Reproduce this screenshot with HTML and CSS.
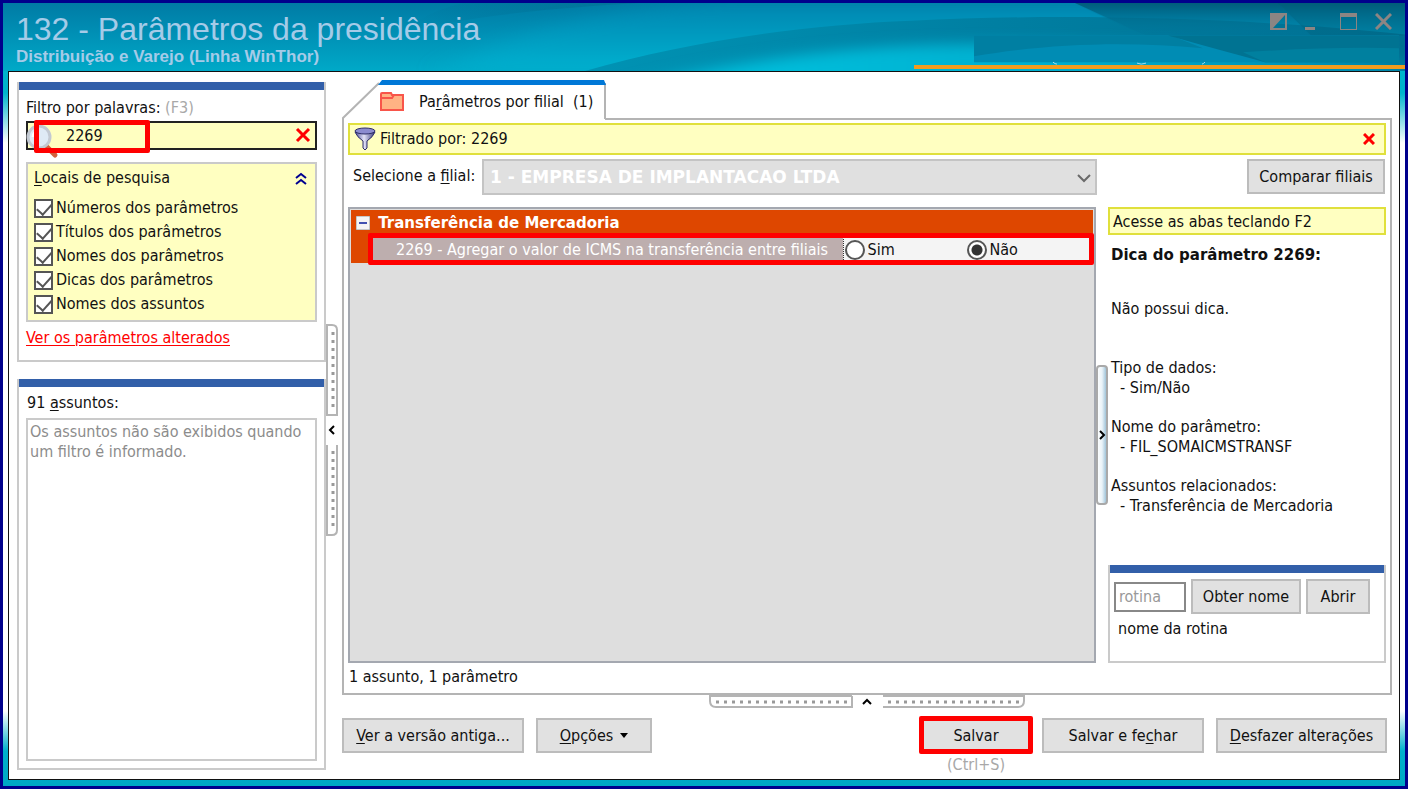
FILE: index.html
```html
<!DOCTYPE html>
<html lang="pt-BR">
<head>
    <meta charset="UTF-8">
    <meta name="viewport" content="width=device-width, initial-scale=1.0">
    <title>132 - Parâmetros da presidência</title>
    <link rel="stylesheet" href="styles.css">
</head>
<body>
    <div class="window">
        <header class="titlebar">
            <svg class="titlebar-art" viewBox="0 0 1402 69" preserveAspectRatio="none" aria-hidden="true">
                <defs>
                    <linearGradient id="sky" x1="0" y1="0" x2="0" y2="1">
                        <stop offset="0" stop-color="#007ba5"/>
                        <stop offset="1" stop-color="#00a9c8"/>
                    </linearGradient>
                    <linearGradient id="mid" x1="0" y1="0" x2="0" y2="1">
                        <stop offset="0" stop-color="#008db8"/>
                        <stop offset="1" stop-color="#00b8d6"/>
                    </linearGradient>
                    <linearGradient id="low" x1="0" y1="0" x2="1" y2="0">
                        <stop offset="0" stop-color="#0093b4"/>
                        <stop offset="0.5" stop-color="#007fa2"/>
                        <stop offset="1" stop-color="#007092"/>
                    </linearGradient>
                    <linearGradient id="glow" x1="0" y1="0" x2="1" y2="0">
                        <stop offset="0" stop-color="#00c4e0"/>
                        <stop offset="0.5" stop-color="#00b0d0"/>
                        <stop offset="1" stop-color="#008aae"/>
                    </linearGradient>
                    <linearGradient id="shade" x1="0" y1="0" x2="1" y2="0">
                        <stop offset="0" stop-color="#006c90" stop-opacity="0"/>
                        <stop offset="1" stop-color="#006c90"/>
                    </linearGradient>
                    <linearGradient id="corner" x1="0" y1="0" x2="0" y2="1">
                        <stop offset="0" stop-color="#00526f"/>
                        <stop offset="1" stop-color="#007c9e" stop-opacity="0"/>
                    </linearGradient>
                    <filter id="soft" x="-10%" y="-50%" width="120%" height="200%">
                        <feGaussianBlur stdDeviation="20 7"/>
                    </filter>
                    <clipPath id="lowClip">
                        <path d="M582 69C680 40 800 22 908 18C1060 10 1250 15 1402 32V69Z"/>
                    </clipPath>
                </defs>
                <rect width="1402" height="69" fill="url(#sky)"/>
                <path d="M400 30C460 14 550 5 637 0H460Q420 10 400 30Z" fill="url(#shade)" opacity="0.6"/>
                <path d="M450 69C480 40 560 10 700 0H1402V69Z" fill="url(#mid)" opacity="0.6" filter="url(#soft)"/>
                <path d="M582 69C680 40 800 22 908 18C1060 10 1250 15 1402 32V69Z" fill="url(#low)"/>
                <g clip-path="url(#lowClip)">
                    <path d="M640 84C740 56 850 44 940 42C1080 38 1250 46 1402 60V90H640Z" fill="url(#glow)" filter="url(#soft)"/>
                </g>
                <path d="M1072 0H1402V33H1143Z" fill="url(#corner)"/>
                <path d="M1072 0C1090 10 1130 28 1145 33H1312L1275 0Z" fill="#007498" opacity="0.3"/>
                <path d="M1275 0H1402V33H1308Z" fill="#006684" opacity="0.5"/>
                <path d="M971 33H1396V60H971Z" fill="#008cb4"/>
                <path d="M971 33H1168L1200 46C1120 38 1040 42 971 54Z" fill="#007fa2"/>
                <path d="M1165 33H1396V60H1262Q1210 46 1165 33Z" fill="#007392"/>
                <path d="M1240 50Q1330 44 1396 46V60H1262Z" fill="#00809f"/>
                <path d="M1050 60q2 2 4 2M1134 61q4 2 9 0M1202 60q-2 2-3 2" fill="none" stroke="#a8d8ea"/>
            </svg>
            <div class="titles">
                <h1>132 - Parâmetros da presidência</h1>
                <p>Distribuição e Varejo (Linha WinThor)</p>
            </div>
            <div class="window-buttons">
                <button type="button" aria-label="Tema">
                    <svg width="17" height="17" viewBox="0 0 17 17"><path d="M0 0H17V17H0ZM3 15H15V2Z" fill="#8c8583" fill-rule="evenodd"/></svg>
                </button>
                <button type="button" aria-label="Minimizar">
                    <svg width="17" height="17" viewBox="0 0 17 17"><path d="M0 14H10V17H0Z" fill="#8c8583"/></svg>
                </button>
                <button type="button" aria-label="Maximizar">
                    <svg width="17" height="17" viewBox="0 0 17 17"><path d="M0 0H17V17H0ZM1 4V16H16V4Z" fill="#8c8583" fill-rule="evenodd"/></svg>
                </button>
                <button type="button" aria-label="Fechar">
                    <svg width="17" height="17" viewBox="0 0 17 17"><path d="M1 1L16 16M16 1L1 16" stroke="#8c8583" stroke-width="3"/></svg>
                </button>
            </div>
            <div class="accent"></div>
        </header>

        <div class="content">
            <aside class="sidebar">
                <section class="box">
                    <label for="filtro">Filtro por palavras: <span class="muted">(F3)</span></label>
                    <div class="search">
                        <svg class="lens" width="34" height="36" viewBox="0 0 34 36" aria-hidden="true">
                            <path d="M19 22L29 32" stroke="#d2603c" stroke-width="5" stroke-linecap="round"/>
                            <circle cx="13" cy="14" r="11" fill="#dfeaf5" stroke="#c3c9d2" stroke-width="3"/>
                            <path d="M7 14a6 6 0 0 1 6-6" fill="none" stroke="#fff" stroke-width="3"/>
                        </svg>
                        <input type="text" id="filtro" value="2269">
                        <button type="button" class="clear" aria-label="Limpar filtro">
                            <svg width="16" height="16" viewBox="0 0 16 16"><path d="M2 2L14 14M14 2L2 14" stroke="#f00" stroke-width="3"/></svg>
                        </button>
                        <span class="mark mark-search"></span>
                    </div>
                    <div class="places">
                        <div class="places-head">
                            <span><u>L</u>ocais de pesquisa</span>
                            <svg width="12" height="13" viewBox="0 0 12 13" aria-hidden="true"><path d="M1 6L6 2L11 6M1 12L6 8L11 12" fill="none" stroke="#000090" stroke-width="2"/></svg>
                        </div>
                        <label><input type="checkbox" checked> Números dos parâmetros</label>
                        <label><input type="checkbox" checked> Títulos dos parâmetros</label>
                        <label><input type="checkbox" checked> Nomes dos parâmetros</label>
                        <label><input type="checkbox" checked> Dicas dos parâmetros</label>
                        <label><input type="checkbox" checked> Nomes dos assuntos</label>
                    </div>
                    <a href="#" class="changed">Ver os parâmetros alterados</a>
                </section>
                <section class="box subjects">
                    <h2>91 <u>a</u>ssuntos:</h2>
                    <p class="subject-list">Os assuntos não são exibidos quando um filtro é informado.</p>
                </section>
            </aside>

            <div class="splitter">
                <svg width="12" height="212" viewBox="0 0 12 212" aria-hidden="true">
                    <path d="M0 1H6Q11 1 11 6V91H0M11 121V206Q11 211 6 211H0M1 0V91M1 121V211" fill="none" stroke="#b4b4b4" stroke-width="2"/>
                    <path d="M7 8V88M7 127V207" stroke="#999" stroke-width="3" stroke-dasharray="3 5"/>
                    <path d="M8 102L4 106L8 110" fill="none" stroke="#000" stroke-width="2"/>
                </svg>
            </div>

            <main class="main">
                <div class="tab">
                    <svg class="tab-shape" width="264" height="40" viewBox="0 0 264 40" aria-hidden="true">
                        <path d="M1 40V38L38 2H263V40Z" fill="#fff"/>
                        <path d="M1 40V38L37 3M263 3V39" fill="none" stroke="#b4b4b4" stroke-width="2"/>
                        <path d="M36 5L40 0H262L264 5Z" fill="#0078d7"/>
                    </svg>
                    <svg width="24" height="19" viewBox="0 0 24 19" aria-hidden="true">
                        <path d="M1 2Q1 1 2 1H11L12 3H23V18H1Z" fill="#ffb384" stroke="#f8554a" stroke-width="2"/>
                        <path d="M1 6H12L14 3" fill="none" stroke="#f8554a" stroke-width="2"/>
                    </svg>
                    <span>Pa<u>r</u>âmetros por filial&nbsp; (1)</span>
                </div>

                <section class="panel">
                    <div class="filter-bar">
                        <svg width="22" height="24" viewBox="0 0 22 24" aria-hidden="true">
                            <defs>
                                <linearGradient id="metal"><stop offset="0" stop-color="#4a4a98"/><stop offset="0.45" stop-color="#e4e4f8"/><stop offset="1" stop-color="#35357c"/></linearGradient>
                            </defs>
                            <path d="M1 5Q3 10 9 14V21L11 23L13 21V14Q19 10 21 5Z" fill="url(#metal)" stroke="#2d2d68"/>
                            <ellipse cx="11" cy="4" rx="10" ry="3" fill="#8c8cd0" stroke="#2d2d68"/>
                        </svg>
                        <span>Filtrado por: 2269</span>
                        <button type="button" class="clear" aria-label="Remover filtro">
                            <svg width="12" height="12" viewBox="0 0 12 12"><path d="M1 1L11 11M11 1L1 11" stroke="#f00" stroke-width="3"/></svg>
                        </button>
                    </div>

                    <div class="branch-row">
                        <label for="filial">Selecione a <u>f</u>ilial:</label>
                        <div class="branch-select">
                            <select id="filial" disabled>
                                <option>1 - EMPRESA DE IMPLANTACAO LTDA</option>
                            </select>
                            <svg width="14" height="9" viewBox="0 0 14 9" aria-hidden="true"><path d="M1 1L7 7L13 1" fill="none" stroke="#6a6a6a" stroke-width="2"/></svg>
                        </div>
                        <button type="button" class="btn compare">Comparar filiais</button>
                    </div>

                    <div class="columns">
                        <div class="grid">
                            <table class="params">
                                <tr class="group">
                                    <th colspan="3">
                                        <svg width="14" height="14" viewBox="0 0 14 14" aria-hidden="true"><rect x="0" y="0" width="14" height="14" fill="#f4f4f4" stroke="#999"/><path d="M3 7H11" stroke="#4050b0" stroke-width="2"/></svg>
                                        Transferência de Mercadoria
                                    </th>
                                </tr>
                                <tr>
                                    <td class="indent"></td>
                                    <td class="name">2269 - Agregar o valor de ICMS na transferência entre filiais</td>
                                    <td class="value">
                                        <div class="radios">
                                            <label><input type="radio" name="p2269"> Sim</label>
                                            <label><input type="radio" name="p2269" checked> Não</label>
                                        </div>
                                    </td>
                                </tr>
                            </table>
                            <span class="mark mark-row"></span>
                        </div>

                        <div class="splitter">
                            <svg width="12" height="140" viewBox="0 0 12 140" aria-hidden="true">
                                <defs>
                                    <linearGradient id="glass"><stop offset="0" stop-color="#fff"/><stop offset="0.5" stop-color="#eaf3f8"/><stop offset="1" stop-color="#8fb9d2"/></linearGradient>
                                </defs>
                                <rect x="1" y="1" width="10" height="138" rx="3" fill="url(#glass)" stroke="#a9a9a9" stroke-width="2"/>
                                <path d="M4 66L8 70L4 74" fill="none" stroke="#000" stroke-width="2"/>
                            </svg>
                        </div>

                        <div class="details">
                            <p class="tip">Acesse as abas teclando F2</p>
                            <h3>Dica do parâmetro 2269:</h3>
                            <p class="hint-text">Não possui dica.</p>
                            <dl>
                                <dt>Tipo de dados:</dt>
                                <dd>- Sim/Não</dd>
                                <dt>Nome do parâmetro:</dt>
                                <dd>- FIL_SOMAICMSTRANSF</dd>
                                <dt>Assuntos relacionados:</dt>
                                <dd>- Transferência de Mercadoria</dd>
                            </dl>
                            <section class="box routine">
                                <div class="routine-row">
                                    <input type="text" placeholder="rotina" aria-label="rotina">
                                    <button type="button" class="btn get-name">Obter nome</button>
                                    <button type="button" class="btn open">Abrir</button>
                                </div>
                                <p>nome da rotina</p>
                            </section>
                        </div>
                    </div>
                    <p class="status">1 assunto, 1 parâmetro</p>
                </section>

                <div class="bottom-splitter">
                    <svg width="316" height="13" viewBox="0 0 316 13" aria-hidden="true">
                        <path d="M1 1V6Q1 12 7 12H143V1M174 12H309Q315 12 315 6V1M0 1H143M174 1H316" fill="none" stroke="#b4b4b4" stroke-width="2"/>
                        <path d="M7 7H140M179 7H312" stroke="#999" stroke-width="3" stroke-dasharray="3 5"/>
                        <path d="M154 9L158 5L162 9" fill="none" stroke="#000" stroke-width="2"/>
                    </svg>
                </div>

                <footer class="toolbar">
                    <button type="button" class="btn old-version"><u>V</u>er a versão antiga...</button>
                    <button type="button" class="btn options">
                        <span><u>O</u>pções</span>
                        <svg width="8" height="5" viewBox="0 0 8 5" aria-hidden="true"><path d="M0 0H8L4 5Z" fill="#000"/></svg>
                    </button>
                    <div class="save">
                        <button type="button" class="btn">Salvar</button>
                        <span class="muted">(Ctrl+S)</span>
                        <span class="mark mark-save"></span>
                    </div>
                    <button type="button" class="btn save-close">Salvar e fe<u>c</u>har</button>
                    <button type="button" class="btn undo"><u>D</u>esfazer alterações</button>
                </footer>
            </main>
        </div>
    </div>
</body>
</html>
```

FILE: styles.css
```css
* {
    box-sizing: border-box;
}
body {
    margin: 0;
    font-family: Tahoma, "DejaVu Sans Condensed", "DejaVu Sans", sans-serif;
    font-size: 16px;
    line-height: 20px;
    color: #111;
}
h1, h2, h3, p, dl, dd {
    margin: 0;
}
input, button, select {
    font: inherit;
    color: inherit;
}
svg {
    display: block;
    flex: none;
}
u {
    text-underline-offset: 2px;
}

/* Window frame */
.window {
    display: flex;
    flex-direction: column;
    min-height: 100vh;
    padding: 0 5px 6px;
    border: 3px solid #00008c;
    background: linear-gradient(to bottom, #00b4cc 0, #00b4cc 90px, #fff 140px, #fff calc(100% - 75px), #00b0cc calc(100% - 35px), #00a8c4 100%);
}
.titlebar {
    position: relative;
    display: flex;
    justify-content: space-between;
    height: 68px;
    margin: 0 -5px;
    padding: 8px 13px 0;
}
.titlebar-art {
    position: absolute;
    top: 0;
    left: 0;
    width: 100%;
    height: 100%;
}
.titles {
    position: relative;
    color: #a5cbe8;
    font-family: "Liberation Sans", Arial, sans-serif;
}
.titles h1 {
    font-size: 32px;
    font-weight: normal;
    line-height: 36px;
}
.titles p {
    font-size: 17px;
    font-weight: bold;
    line-height: 20px;
}
.window-buttons {
    position: relative;
    display: flex;
    align-items: flex-start;
    gap: 18px;
    padding-top: 2px;
}
.window-buttons button {
    padding: 0;
    border: 0;
    background: none;
}
.accent {
    position: absolute;
    right: 0;
    bottom: 2px;
    width: 35%;
    height: 4px;
    background: #f39c1f;
}
.content {
    flex: 1;
    display: flex;
    padding: 8px 7px 0 8px;
    border: 1px solid #111;
    background: #fff;
}

/* Left column */
.sidebar {
    display: flex;
    flex-direction: column;
    gap: 17px;
    width: 309px;
    padding: 2px 0 9px;
}
.box {
    padding: 16px 7px 2px;
    border: 2px solid #cacaca;
    border-top: 0;
    background: linear-gradient(#325fa9 8px, #fff 8px);
}
.search {
    position: relative;
    margin: 3px 0 12px;
}
.search input {
    display: block;
    width: 100%;
    height: 29px;
    padding: 0 32px 0 38px;
    border: 2px solid #222;
    background: #ffffc1;
}
.search .clear {
    position: absolute;
    top: 6px;
    right: 6px;
}
.lens {
    position: absolute;
    top: 2px;
    left: 0;
}
.clear {
    padding: 0;
    border: 0;
    background: none;
}
.places {
    display: flex;
    flex-direction: column;
    height: 160px;
    padding: 4px 6px;
    border: 2px solid #cacaca;
    background: #ffffc1;
}
.places-head {
    display: flex;
    align-items: center;
    justify-content: space-between;
    margin-bottom: 8px;
    padding-right: 2px;
}
.places label, .radios label {
    display: flex;
    align-items: center;
    gap: 3px;
    height: 24px;
}
input[type="checkbox"] {
    appearance: none;
    width: 19px;
    height: 19px;
    margin: 0;
    border: 2px solid #555;
    background: #fff;
}
input[type="checkbox"]:checked::after {
    content: "";
    display: block;
    width: 13px;
    height: 7px;
    margin: 2px 1px;
    border-left: 2px solid #555;
    border-bottom: 2px solid #555;
    transform: rotate(-48deg);
}
.changed {
    display: inline-block;
    margin: 6px 0 10px;
    color: #f00;
    text-underline-offset: 2px;
}
.subjects {
    flex: 1;
    display: flex;
    flex-direction: column;
    padding: 14px 7px 7px;
}
.subjects h2 {
    font-size: 16px;
    font-weight: normal;
    margin: 0 0 5px 1px;
}
.subject-list {
    flex: 1;
    padding: 2px;
    border: 2px solid #cacaca;
    color: #8c8c8c;
}
.splitter {
    display: flex;
    align-items: center;
    width: 12px;
}
.muted {
    color: #a8a8a8;
}

/* Main area */
.main {
    flex: 1;
    display: flex;
    flex-direction: column;
    margin-left: 4px;
}
.tab {
    position: relative;
    display: flex;
    align-items: center;
    gap: 15px;
    width: 264px;
    height: 40px;
    margin-bottom: -2px;
    padding: 3px 0 0 38px;
    z-index: 1;
}
.tab-shape {
    position: absolute;
    top: 0;
    left: 0;
    z-index: -1;
}
.panel {
    flex: 1;
    display: flex;
    flex-direction: column;
    padding: 3px 4px 6px;
    border: 2px solid #b4b4b4;
}
.filter-bar {
    display: flex;
    align-items: center;
    gap: 4px;
    height: 32px;
    padding: 0 9px 0 4px;
    border: 2px solid #e0e03c;
    background: #ffffc1;
}
.filter-bar .clear {
    margin-left: auto;
}
.branch-row {
    display: flex;
    margin-top: 4px;
    padding: 0 1px 0 5px;
}
.branch-row label {
    width: 129px;
    padding-top: 7px;
}
.branch-select {
    position: relative;
    flex: 1;
    margin-right: 150px;
}
.branch-select select {
    appearance: none;
    display: block;
    width: 100%;
    height: 36px;
    padding: 0 30px 0 6px;
    border: 2px solid #c4c4c4;
    border-radius: 0;
    background: #e0e0e0;
    color: #fff;
    font-family: "DejaVu Sans", sans-serif;
    font-size: 17px;
    font-weight: bold;
    opacity: 1;
}
.branch-select svg {
    position: absolute;
    top: 15px;
    right: 6px;
}
.btn {
    height: 35px;
    padding: 0 8px;
    border: 2px solid #bcbcbc;
    background: #e1e1e1;
    white-space: nowrap;
}
.compare {
    width: 138px;
}
.columns {
    flex: 1;
    display: flex;
    margin-top: 12px;
}
.grid {
    position: relative;
    flex: 1;
    padding: 1px;
    border: 2px solid #a4a8b0;
    background: #dedede;
}
.params {
    width: 100%;
    border-collapse: collapse;
}
.params th {
    height: 27px;
    padding: 0 5px;
    background: #de4700;
    color: #fff;
    font-family: "DejaVu Sans", sans-serif;
    font-size: 15px;
    text-align: left;
}
.params th svg {
    display: inline-block;
    margin-right: 3px;
    vertical-align: -2px;
}
.params td {
    height: 26px;
    padding: 0;
}
.params .indent {
    width: 20px;
    background: #de4700;
}
.params .name {
    width: 472px;
    padding-left: 25px;
    background: #bdaeae;
    color: #fff;
    white-space: nowrap;
}
.params .value {
    padding-left: 1px;
    border: 1px dotted #333;
    background: #f4f4f4;
}
.radios {
    display: grid;
    grid-template-columns: 122px 1fr;
}
input[type="radio"] {
    appearance: none;
    width: 20px;
    height: 20px;
    margin: 0;
    border: 2px solid #555;
    border-radius: 50%;
    background: #fff;
}
input[type="radio"]:checked {
    background: radial-gradient(circle, #333 5px, #fff 6px);
}

/* Parameter details */
.details {
    display: flex;
    flex-direction: column;
    width: 278px;
}
.tip {
    height: 28px;
    padding: 3px;
    border: 2px solid #e0e03c;
    background: #ffffc1;
}
.details h3 {
    margin: 10px 0 0 3px;
    font-family: "DejaVu Sans", sans-serif;
    font-size: 15px;
}
.hint-text {
    margin: 34px 0 0 3px;
}
.details dl {
    margin: 39px 0 0 3px;
}
.details dd {
    margin: 0 0 19px 9px;
}
.routine {
    height: 98px;
    margin-top: auto;
    padding: 14px 4px 6px;
}
.routine-row {
    display: flex;
    align-items: center;
    gap: 5px;
    margin-bottom: 5px;
}
.routine input {
    width: 72px;
    height: 30px;
    padding: 0 3px;
    border: 2px solid #888;
}
.routine input::placeholder {
    color: #999;
}
.routine p {
    padding-left: 4px;
}
.get-name {
    width: 110px;
}
.open {
    width: 64px;
}
.status {
    margin-top: 4px;
    padding-left: 1px;
}

/* Bottom bar */
.bottom-splitter {
    display: flex;
    justify-content: center;
}
.toolbar {
    display: flex;
    align-items: flex-start;
    gap: 12px;
    height: 61px;
    margin-top: 10px;
    padding-right: 5px;
}
.old-version {
    width: 182px;
}
.options {
    display: flex;
    align-items: center;
    justify-content: center;
    gap: 7px;
    width: 116px;
}
.save {
    position: relative;
    display: flex;
    flex-direction: column;
    align-items: center;
    gap: 2px;
    width: 108px;
    margin-left: auto;
}
.save .btn {
    width: 100%;
}
.save-close {
    width: 162px;
}
.undo {
    width: 171px;
}

/* Red highlight frames */
.mark {
    position: absolute;
    border: 5px solid #f00;
    border-radius: 2px;
    pointer-events: none;
}
.mark-search {
    top: -1px;
    left: 8px;
    width: 116px;
    height: 33px;
}
.mark-row {
    top: 24px;
    left: 18px;
    right: 0;
    height: 32px;
}
.mark-save {
    top: -2px;
    left: -3px;
    right: -3px;
    height: 38px;
}
```
